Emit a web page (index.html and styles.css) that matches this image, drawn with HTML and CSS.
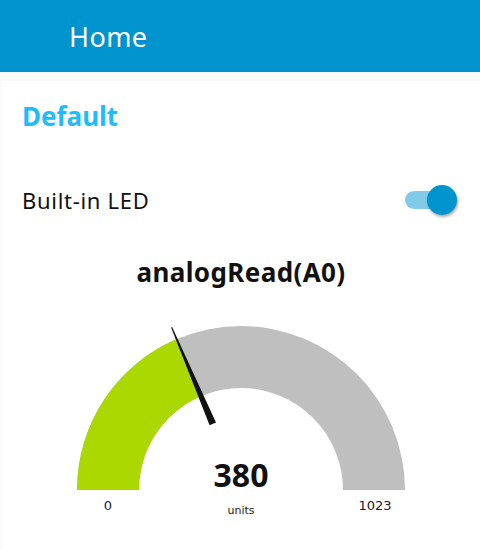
FILE: index.html
```html
<!DOCTYPE html>
<html>
<head>
<meta charset="utf-8">
<link rel="stylesheet" href="styles.css">
</head>
<body>
<header class="toolbar"><h1 class="title">Home</h1></header>
<main class="content">
  <section class="card">
    <h2 class="group-title">Default</h2>
    <div class="switch-row">
      <span class="switch-label">Built-in LED</span>
      <span class="switch">
        <span class="track"></span>
        <span class="knob"></span>
      </span>
    </div>
    <div class="gauge-block">
      <div class="gauge-title">analogRead(A0)</div>
      <svg class="gauge" width="476" height="240" viewBox="0 0 476 240">
        <path d="M74 179 A164 164 0 0 1 402 179 L340 179 A102 102 0 0 0 136 179 Z" fill="#bfbfbf"/>
        <path d="M74 179 A164 164 0 0 1 173.6 28.1 L197.9 85.2 A102 102 0 0 0 136 179 Z" fill="#abd800"/>
        <polygon points="168.1,16.4 169.1,16.0 213.0,111.4 206.6,114.2" fill="#111"/>
        <text x="238" y="176" class="g-value" text-anchor="middle">380</text>
        <text x="238" y="203" class="g-units" text-anchor="middle">units</text>
        <text x="105" y="199" class="g-minmax" text-anchor="middle">0</text>
        <text x="372" y="199" class="g-minmax" text-anchor="middle">1023</text>
      </svg>
    </div>
  </section>
</main>
</body>
</html>
```
FILE: styles.css
```css
html, body {
  margin: 0;
  padding: 0;
  background: #fafafa;
  font-family: "Noto Sans", "Open Sans", sans-serif;
  width: 480px;
  height: 550px;
  overflow: hidden;
}
.toolbar {
  height: 72px;
  background: #0094ce;
  display: flex;
  align-items: center;
  padding-left: 69px;
}
.title {
  margin: 0;
  color: #fff;
  font-weight: 400;
  font-size: 27px;
  letter-spacing: 0.4px;
}
.content {
  padding: 9px 0 0 2px;
}
.card {
  background: #fff;
  height: 470px;
  padding: 0 0 0 20px;
}
.group-title {
  margin: 0;
  padding-top: 18px;
  height: 42px;
  color: #1fbcfb;
  font-size: 26px;
  font-weight: 700;
  line-height: 34px;
}
.switch-row {
  display: flex;
  align-items: center;
  justify-content: space-between;
  height: 40px;
  margin-top: 39px;
  padding-right: 22px;
}
.switch-label {
  font-size: 22px;
  letter-spacing: 0.7px;
  color: #111;
}
.switch {
  position: relative;
  width: 54px;
  height: 32px;
  display: block;
}
.track {
  position: absolute;
  left: 1px;
  top: 7px;
  width: 42px;
  height: 18px;
  border-radius: 9px;
  background: #80cbea;
}
.knob {
  position: absolute;
  left: 23px;
  top: 1px;
  width: 30px;
  height: 30px;
  border-radius: 50%;
  background: #0094ce;
  box-shadow: 1px 2px 3px rgba(0,0,0,0.35);
}
.gauge-block {
  margin-left: -20px;
  display: flex;
  flex-direction: column;
  align-items: center;
}
.gauge-title {
  margin-top: 35px;
  font-size: 26px;
  font-weight: 700;
  letter-spacing: 0.4px;
  color: #111;
  line-height: 34px;
}
.gauge {
  display: block;
  margin-top: 22px;
}
.g-value {
  font-family: "Noto Sans", sans-serif;
  font-weight: 700;
  font-size: 32px;
  fill: #111;
}
.g-units {
  font-family: "DejaVu Sans", sans-serif;
  font-size: 11px;
  fill: #222;
}
.g-minmax {
  font-family: "DejaVu Sans", sans-serif;
  font-size: 13px;
  fill: #222;
}
```
